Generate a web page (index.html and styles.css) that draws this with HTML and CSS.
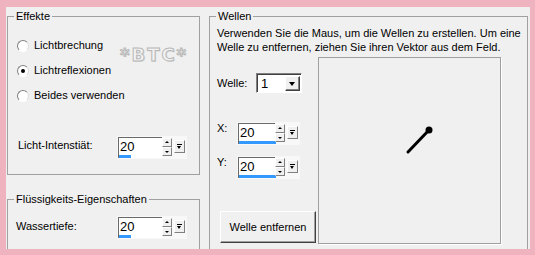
FILE: index.html
```html
<!DOCTYPE html>
<html lang="de">
<head>
  <meta charset="UTF-8">
  <title>Wellen</title>
  <link rel="stylesheet" href="styles.css">
</head>
<body>

<div class="window">
  <div class="col-left">
    <fieldset class="group effects">
      <legend>Effekte</legend>
      <div class="radios">
        <div class="watermark">*BTC*</div>
        <label class="radio"><span class="radio-mark"></span>Lichtbrechung</label>
        <label class="radio"><span class="radio-mark checked"></span>Lichtreflexionen</label>
        <label class="radio"><span class="radio-mark"></span>Beides verwenden</label>
      </div>
      <div class="field-row light-row">
        <span class="field-label">Licht-Intenstiät:</span>
        <div class="spin">
          <div class="spin-box"><span class="spin-value">20</span><span class="spin-level" style="width: 12px"></span></div>
          <div class="spin-arrows"><span class="arrow up"></span><span class="arrow down"></span></div>
          <span class="spin-menu"></span>
        </div>
      </div>
    </fieldset>

    <fieldset class="group liquid">
      <legend>Flüssigkeits-Eigenschaften</legend>
      <div class="field-row depth-row">
        <span class="field-label">Wassertiefe:</span>
        <div class="spin">
          <div class="spin-box"><span class="spin-value">20</span><span class="spin-level" style="width: 12px"></span></div>
          <div class="spin-arrows"><span class="arrow up"></span><span class="arrow down"></span></div>
          <span class="spin-menu"></span>
        </div>
      </div>
    </fieldset>
  </div>

  <fieldset class="group waves">
    <legend>Wellen</legend>
    <p class="hint">Verwenden Sie die Maus, um die Wellen zu erstellen. Um eine Welle zu entfernen, ziehen Sie ihren Vektor aus dem Feld.</p>
    <div class="wave-area">
      <div class="wave-controls">
        <div class="wave-row">
          <span class="wave-label">Welle:</span>
          <div class="select">
            <span class="select-value">1</span>
            <span class="select-btn"></span>
          </div>
        </div>
        <div class="wave-row xy-row">
          <span class="xy-label">X:</span>
          <div class="spin">
            <div class="spin-box small"><span class="spin-value">20</span><span class="spin-level" style="width: 37px"></span></div>
            <div class="spin-arrows"><span class="arrow up"></span><span class="arrow down"></span></div>
            <span class="spin-menu"></span>
          </div>
        </div>
        <div class="wave-row xy-row y-row">
          <span class="xy-label">Y:</span>
          <div class="spin">
            <div class="spin-box small"><span class="spin-value">20</span><span class="spin-level" style="width: 37px"></span></div>
            <div class="spin-arrows"><span class="arrow up"></span><span class="arrow down"></span></div>
            <span class="spin-menu"></span>
          </div>
        </div>
        <button class="btn">Welle entfernen</button>
      </div>
      <div class="wave-field">
        <svg width="181" height="185" viewBox="0 0 181 185">
          <line x1="89" y1="94" x2="110" y2="72" stroke="#000" stroke-width="3" stroke-linecap="round"/>
          <circle cx="110" cy="72" r="3.5" fill="#000"/>
        </svg>
      </div>
    </div>
  </fieldset>
</div>

</body>
</html>
```

FILE: styles.css
```css
html, body {
  margin: 0;
  height: 255px;
  overflow: hidden;
}
body {
  background: #efb3bf;
  font-family: 'Liberation Sans', Arial, sans-serif;
  font-size: 11px;
  line-height: 13px;
  color: #000;
}
.window {
  margin: 7px 5px 0 6px;
  height: 242px;
  background: #f0f0f0;
  overflow: hidden;
  display: flex;
  gap: 9px;
  padding-left: 1px;
  box-sizing: border-box;
}
.col-left {
  width: 193px;
  flex: none;
}
.group {
  margin: 3px 0 0;
  padding: 0;
  border: 1px solid #a0a0a0;
  box-sizing: border-box;
  min-width: 0;
}
.group legend {
  margin-left: 6px;
  padding: 0 2px;
  line-height: 13px;
}
.effects {
  height: 165px;
}
.liquid {
  margin-top: 18px;
  height: 80px;
}
.waves {
  width: 319px;
  height: 260px;
  flex: none;
}

/* radios */
.radios {
  position: relative;
  margin-top: 16px;
  padding-left: 9px;
  display: flex;
  flex-direction: column;
  gap: 12px;
}
.radio {
  display: flex;
  align-items: center;
  height: 13px;
}
.radio-mark {
  width: 12px;
  height: 12px;
  box-sizing: border-box;
  border-radius: 50%;
  background: #fff;
  border: 1px solid;
  border-color: #808080 #dcdcdc #fff #808080;
  margin-right: 5px;
  position: relative;
}
.radio-mark.checked::after {
  content: '';
  position: absolute;
  left: 3px;
  top: 3px;
  width: 4px;
  height: 4px;
  border-radius: 50%;
  background: #000;
}
.watermark {
  position: absolute;
  left: 112px;
  top: 7px;
  font-family: 'DejaVu Sans', sans-serif;
  font-size: 18px;
  line-height: 18px;
  font-weight: bold;
  letter-spacing: 2px;
  color: #f2f2f2;
  -webkit-text-stroke: 1px #b8b8b8;
  text-shadow: 1px 1px 0 #d8d8d8;
}

/* rows with spin fields */
.field-row {
  display: flex;
  align-items: flex-start;
}
.light-row {
  margin-top: 34px;
  padding-left: 10px;
}
.light-row .field-label {
  width: 99px;
  padding-top: 3px;
}
.depth-row {
  margin-top: 10px;
  padding-left: 8px;
}
.depth-row .field-label {
  width: 101px;
  padding-top: 4px;
}

.spin {
  display: flex;
  align-items: flex-start;
  padding: 1px 2px 1px 1px;
  background: #f8f8f8;
}
.spin-box {
  position: relative;
  width: 44px;
  height: 21px;
  box-sizing: border-box;
  background: #fff;
  border-left: 1px solid #6a6a6a;
  border-top: 1px solid #6a6a6a;
}
.spin-box.small {
  width: 37px;
}
.spin-value {
  display: block;
  padding: 2px 0 0 1px;
  font-size: 13px;
  line-height: 14px;
}
.spin-level {
  position: absolute;
  left: 0;
  bottom: 0;
  height: 3px;
  background: #3399ff;
}
.spin-arrows {
  display: flex;
  flex-direction: column;
  width: 10px;
  margin-top: 1px;
}
.arrow {
  position: relative;
  height: 9px;
  background: #f0f0f0;
  border: 1px solid;
  border-color: #fff #808080 #808080 #fff;
  box-sizing: border-box;
}
.arrow::after {
  content: '';
  position: absolute;
  left: 2px;
  border-left: 2px solid transparent;
  border-right: 2px solid transparent;
}
.arrow.up::after {
  top: 2px;
  border-bottom: 2px solid #000;
}
.arrow.down::after {
  top: 3px;
  border-top: 2px solid #000;
}
.spin-menu {
  position: relative;
  width: 11px;
  height: 13px;
  margin: 3px 0 0 2px;
  box-sizing: border-box;
  background: #f0f0f0;
  border: 1px solid;
  border-color: #fff #808080 #808080 #fff;
}
.spin-menu::before {
  content: '';
  position: absolute;
  left: 2px;
  top: 3px;
  width: 5px;
  height: 1px;
  background: #000;
}
.spin-menu::after {
  content: '';
  position: absolute;
  left: 2px;
  top: 5px;
  border-left: 2.5px solid transparent;
  border-right: 2.5px solid transparent;
  border-top: 3px solid #000;
}

/* waves */
.hint {
  margin: 3px 0 0;
  padding-left: 7px;
  line-height: 14px;
}
.wave-area {
  display: flex;
  gap: 3px;
  margin-top: 3px;
  padding-left: 7px;
}
.wave-controls {
  width: 98px;
  display: flex;
  flex-direction: column;
}
.wave-row {
  display: flex;
  align-items: center;
  margin-top: 16px;
}
.wave-label {
  width: 39px;
}
.select {
  display: flex;
  align-items: center;
  justify-content: space-between;
  width: 46px;
  height: 20px;
  box-sizing: border-box;
  background: #fff;
  border: 1px solid;
  border-color: #808080 #fff #fff #808080;
  box-shadow: inset 1px 1px #404040;
  padding: 1px 1px 0 4px;
}
.select-value {
  font-size: 13px;
  line-height: 14px;
}
.select-btn {
  position: relative;
  width: 15px;
  height: 15px;
  box-sizing: border-box;
  background: #f0f0f0;
  border: 1px solid;
  border-color: #fff #404040 #404040 #fff;
  box-shadow: inset -1px -1px #808080;
}
.select-btn::after {
  content: '';
  position: absolute;
  left: 3px;
  top: 5px;
  border-left: 3.5px solid transparent;
  border-right: 3.5px solid transparent;
  border-top: 4px solid #000;
}
.xy-row {
  align-items: flex-start;
  margin-top: 29px;
}
.y-row {
  margin-top: 11px;
}
.xy-label {
  width: 20px;
}
.btn {
  margin: 32px 0 0 3px;
  width: 96px;
  height: 32px;
  padding: 0;
  background: #f0f0f0;
  font-family: inherit;
  font-size: 11px;
  color: #000;
  border: 1px solid;
  border-color: #fff #404040 #404040 #fff;
  box-shadow: inset -1px -1px #a0a0a0;
}
.wave-field {
  width: 183px;
  height: 187px;
  box-sizing: border-box;
  border: 1px solid #a0a0a0;
  box-shadow: 1px 1px 0 #fff;
}
.wave-field svg {
  display: block;
}
```
